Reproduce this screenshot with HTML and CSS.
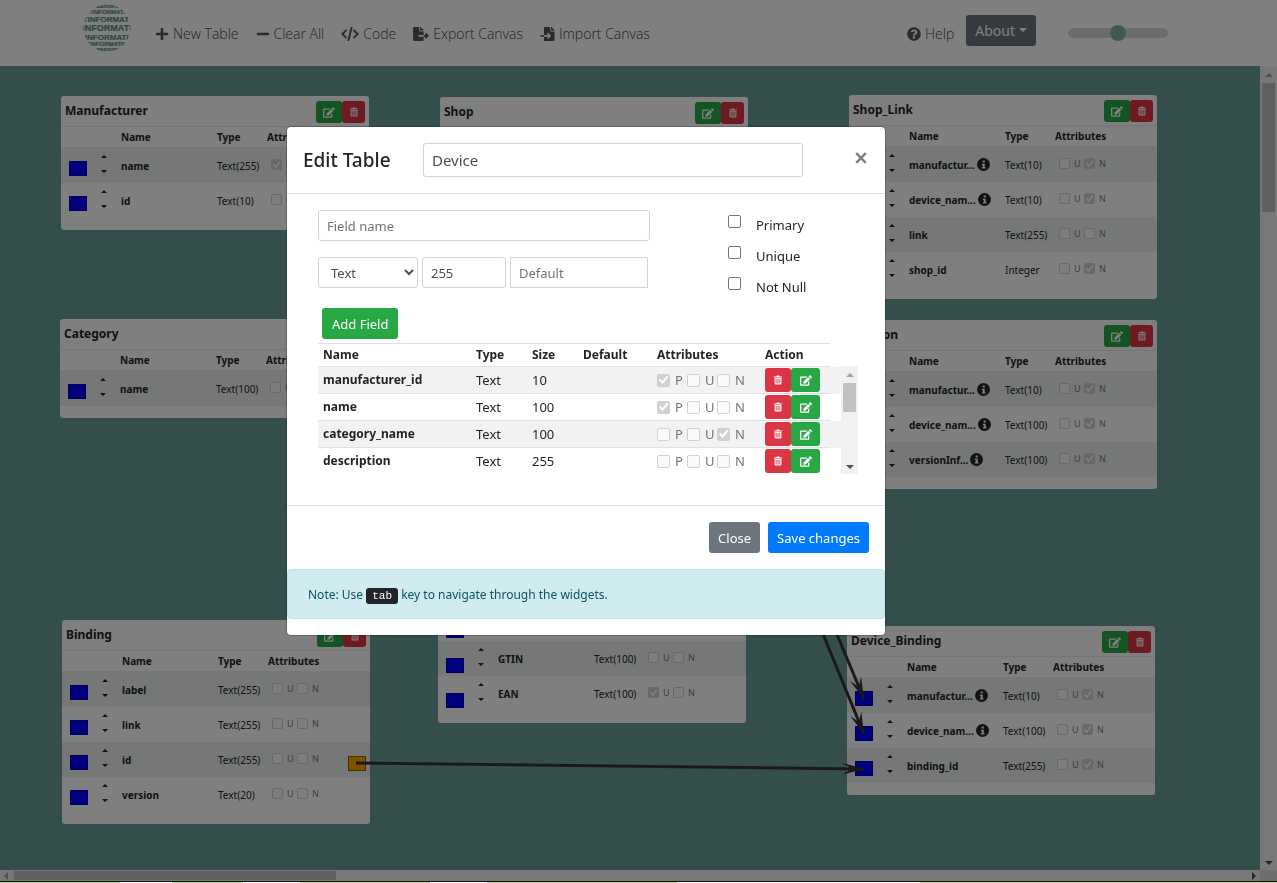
FILE: index.html
```html
<!DOCTYPE html>
<html lang="en">
<head>
<meta charset="utf-8">
<title>Table Designer</title>
<link rel="stylesheet" href="styles.css">
</head>
<body>
<svg class="defs" aria-hidden="true">
  <symbol id="plus" viewBox="0 0 448 512"><path d="M416 208H272V64c0-17.67-14.33-32-32-32h-32c-17.67 0-32 14.33-32 32v144H32c-17.67 0-32 14.33-32 32v32c0 17.67 14.33 32 32 32h144v144c0 17.67 14.33 32 32 32h32c17.67 0 32-14.33 32-32V304h144c17.67 0 32-14.33 32-32v-32c0-17.67-14.33-32-32-32z"/></symbol>
  <symbol id="minus" viewBox="0 0 448 512"><path d="M416 208H32c-17.67 0-32 14.33-32 32v32c0 17.67 14.33 32 32 32h384c17.67 0 32-14.33 32-32v-32c0-17.67-14.33-32-32-32z"/></symbol>
  <symbol id="code" viewBox="0 0 640 512"><path d="M175 125L40 256l135 131M465 125l135 131-135 131M378 30L262 482" fill="none" stroke="currentColor" stroke-width="68" stroke-linecap="round" stroke-linejoin="round"/></symbol>
  <symbol id="export" viewBox="0 0 576 512"><path d="M384 121.900c0-6.300-2.500-12.400-7-16.900L279.100 7c-4.500-4.500-10.600-7-17-7H256v128h128zM571 308l-95.700-96.400c-10.100-10.100-27.400-3-27.400 11.300V288h-64v64h64v65.200c0 14.300 17.300 21.400 27.400 11.300L571 332c6.600-6.600 6.600-17.400 0-24zm-379 28v-32c0-8.800 7.200-16 16-16h176V160H248c-13.200 0-24-10.800-24-24V0H24C10.700 0 0 10.700 0 24v464c0 13.300 10.700 24 24 24h336c13.300 0 24-10.700 24-24V352H208c-8.800 0-16-7.200-16-16z"/></symbol>
  <symbol id="import" viewBox="0 0 512 512"><path d="M16 288c-8.800 0-16 7.200-16 16v32c0 8.800 7.200 16 16 16h112v-64zm489-183L407.100 7c-4.500-4.500-10.600-7-17-7H384v128h128v-6.100c0-6.300-2.500-12.400-7-16.900zm-153 31V0H152c-13.300 0-24 10.700-24 24v264h128v-65.200c0-14.300 17.300-21.400 27.400-11.300L379 308c6.600 6.700 6.600 17.400 0 24l-95.700 96.400c-10.100 10.100-27.400 3-27.400-11.300V352H128v136c0 13.300 10.700 24 24 24h336c13.300 0 24-10.700 24-24V160H376c-13.200 0-24-10.800-24-24z"/></symbol>
  <symbol id="help" viewBox="0 0 512 512"><path d="M504 256c0 136.997-111.043 248-248 248S8 392.997 8 256C8 119.083 119.043 8 256 8s248 111.083 248 248zM262.655 90c-54.497 0-89.255 22.957-116.549 63.758-3.536 5.286-2.353 12.415 2.715 16.258l34.699 26.310c5.205 3.947 12.621 3.008 16.665-2.122 17.864-22.658 30.113-35.797 57.303-35.797 20.429 0 45.698 13.148 45.698 32.958 0 14.976-12.363 22.667-32.534 33.976C247.128 238.528 216 254.941 216 296v4c0 6.627 5.373 12 12 12h56c6.627 0 12-5.373 12-12v-1.333c0-28.462 83.186-29.647 83.186-106.667 0-58.002-60.165-102-116.531-102zM256 338c-25.365 0-46 20.635-46 46 0 25.364 20.635 46 46 46s46-20.636 46-46c0-25.365-20.635-46-46-46z"/></symbol>
  <symbol id="info" viewBox="0 0 16 16"><circle cx="8" cy="8" r="8"/><path d="M7 3h2.500v2.500H7zM6 7h3.500v4.500h1V13H6v-1.500h1v-3H6z" fill="#fff"/></symbol>
  <symbol id="edit" viewBox="0 0 576 512"><path d="M402.600 83.200l90.200 90.200c3.800 3.800 3.800 10 0 13.800L274.400 405.600l-92.800 10.300c-12.400 1.400-22.900-9.100-21.500-21.500l10.300-92.800L388.800 83.200c3.800-3.800 10-3.800 13.800 0zm162-22.900l-48.800-48.800c-15.200-15.200-39.900-15.200-55.200 0l-35.400 35.400c-3.800 3.800-3.800 10 0 13.800l90.200 90.200c3.800 3.800 10 3.800 13.800 0l35.400-35.400c15.200-15.300 15.200-40 0-55.200zM384 346.200V448H64V128h229.800c3.200 0 6.200-1.300 8.500-3.500l40-40c7.600-7.600 2.200-20.500-8.500-20.500H48C21.500 64 0 85.500 0 112v352c0 26.500 21.500 48 48 48h352c26.500 0 48-21.500 48-48V306.200c0-10.700-12.900-16-20.500-8.500l-40 40c-2.200 2.300-3.500 5.300-3.500 8.500z"/></symbol>
  <symbol id="trash" viewBox="0 0 14 16"><path d="M0 2h4l1-2h4l1 2h4v1.500H0zM1 4.500h12V14q0 2-2 2H3q-2 0-2-2zM3 6v8h1.500V6zm3.200 0v8h1.600V6zm3.300 0v8H11V6z" fill-rule="evenodd"/></symbol>
  <symbol id="sort" viewBox="0 0 6 20"><path d="M0 4l3-3 3 3zM0 16h6l-3 3z"/></symbol>
</svg>

<header class="navbar">
  <svg class="logo" viewBox="0 0 48 48" role="img" aria-label="Logo">
    <clipPath id="globe"><circle cx="24" cy="24" r="23.500"/></clipPath>
    <g clip-path="url(#globe)" text-anchor="middle">
      <text x="24" y="4" font-size="4">INFORMATIONFORMAT</text>
      <text x="24" y="10" font-size="6">MATINFORMATION</text>
      <text x="24" y="18" font-size="8">TINFORMATI</text>
      <text x="24" y="27" font-size="9">INFORMATI</text>
      <text x="24" y="36" font-size="8">NINFORMATIO</text>
      <text x="24" y="42" font-size="6">ATINFORMATION</text>
      <text x="24" y="47" font-size="4">INFORMATIONFORM</text>
    </g>
  </svg>
  <nav class="tools">
    <a href="#"><svg class="i14"><use href="#plus"/></svg>New Table</a>
    <a href="#"><svg class="i14"><use href="#minus"/></svg>Clear All</a>
    <a href="#"><svg class="i18"><use href="#code"/></svg>Code</a>
    <a href="#"><svg class="i16"><use href="#export"/></svg>Export Canvas</a>
    <a href="#"><svg class="i15"><use href="#import"/></svg>Import Canvas</a>
  </nav>
  <div class="nav-end">
    <a href="#"><svg class="i14"><use href="#help"/></svg>Help</a>
    <button class="btn about">About<span class="caret"></span></button>
    <input class="zoom" type="range" min="0" max="100" value="50" aria-label="Zoom">
  </div>
</header>

<main class="workspace">
  <section class="canvas">
    <article class="node" style="left:61px;top:30px">
      <header><h2>Manufacturer</h2><button class="ed" aria-label="Edit"><svg><use href="#edit"/></svg></button><button class="rm" aria-label="Delete"><svg><use href="#trash"/></svg></button></header>
      <table>
        <thead><tr><th></th><th></th><th>Name</th><th>Type</th><th>Attributes</th><th></th></tr></thead>
        <tbody>
          <tr><td><i class="port"></i></td><td><svg class="sort"><use href="#sort"/></svg></td><th>name</th><td>Text(255)</td><td><label><input type="checkbox" disabled checked>U</label><label><input type="checkbox" disabled>N</label></td><td></td></tr>
          <tr><td><i class="port"></i></td><td><svg class="sort"><use href="#sort"/></svg></td><th>id</th><td>Text(10)</td><td><label><input type="checkbox" disabled>U</label><label><input type="checkbox" disabled>N</label></td><td></td></tr>
        </tbody>
      </table>
    </article>

    <article class="node" style="left:440px;top:31px">
      <header><h2>Shop</h2><button class="ed" aria-label="Edit"><svg><use href="#edit"/></svg></button><button class="rm" aria-label="Delete"><svg><use href="#trash"/></svg></button></header>
      <table>
        <thead><tr><th></th><th></th><th>Name</th><th>Type</th><th>Attributes</th><th></th></tr></thead>
        <tbody>
          <tr><td><i class="port"></i></td><td><svg class="sort"><use href="#sort"/></svg></td><th>id</th><td>Integer</td><td><label><input type="checkbox" disabled>U</label><label><input type="checkbox" disabled>N</label></td><td></td></tr>
        </tbody>
      </table>
    </article>

    <article class="node" style="left:849px;top:29px">
      <header><h2>Shop_Link</h2><button class="ed" aria-label="Edit"><svg><use href="#edit"/></svg></button><button class="rm" aria-label="Delete"><svg><use href="#trash"/></svg></button></header>
      <table>
        <thead><tr><th></th><th></th><th>Name</th><th>Type</th><th>Attributes</th><th></th></tr></thead>
        <tbody>
          <tr><td><i class="port"></i></td><td><svg class="sort"><use href="#sort"/></svg></td><th><span>manufactur...<svg class="info"><use href="#info"/></svg></span></th><td>Text(10)</td><td><label><input type="checkbox" disabled>U</label><label><input type="checkbox" disabled checked>N</label></td><td></td></tr>
          <tr><td><i class="port"></i></td><td><svg class="sort"><use href="#sort"/></svg></td><th><span>device_nam...<svg class="info"><use href="#info"/></svg></span></th><td>Text(10)</td><td><label><input type="checkbox" disabled>U</label><label><input type="checkbox" disabled checked>N</label></td><td></td></tr>
          <tr><td><i class="port"></i></td><td><svg class="sort"><use href="#sort"/></svg></td><th>link</th><td>Text(255)</td><td><label><input type="checkbox" disabled>U</label><label><input type="checkbox" disabled>N</label></td><td></td></tr>
          <tr><td><i class="port"></i></td><td><svg class="sort"><use href="#sort"/></svg></td><th>shop_id</th><td>Integer</td><td><label><input type="checkbox" disabled>U</label><label><input type="checkbox" disabled checked>N</label></td><td></td></tr>
        </tbody>
      </table>
    </article>

    <article class="node" style="left:60px;top:253px">
      <header><h2>Category</h2><button class="ed" aria-label="Edit"><svg><use href="#edit"/></svg></button><button class="rm" aria-label="Delete"><svg><use href="#trash"/></svg></button></header>
      <table>
        <thead><tr><th></th><th></th><th>Name</th><th>Type</th><th>Attributes</th><th></th></tr></thead>
        <tbody>
          <tr><td><i class="port"></i></td><td><svg class="sort"><use href="#sort"/></svg></td><th>name</th><td>Text(100)</td><td><label><input type="checkbox" disabled>U</label><label><input type="checkbox" disabled>N</label></td><td></td></tr>
        </tbody>
      </table>
    </article>

    <article class="node" style="left:849px;top:254px">
      <header><h2>Version</h2><button class="ed" aria-label="Edit"><svg><use href="#edit"/></svg></button><button class="rm" aria-label="Delete"><svg><use href="#trash"/></svg></button></header>
      <table>
        <thead><tr><th></th><th></th><th>Name</th><th>Type</th><th>Attributes</th><th></th></tr></thead>
        <tbody>
          <tr><td><i class="port"></i></td><td><svg class="sort"><use href="#sort"/></svg></td><th><span>manufactur...<svg class="info"><use href="#info"/></svg></span></th><td>Text(10)</td><td><label><input type="checkbox" disabled>U</label><label><input type="checkbox" disabled checked>N</label></td><td></td></tr>
          <tr><td><i class="port"></i></td><td><svg class="sort"><use href="#sort"/></svg></td><th><span>device_nam...<svg class="info"><use href="#info"/></svg></span></th><td>Text(100)</td><td><label><input type="checkbox" disabled>U</label><label><input type="checkbox" disabled checked>N</label></td><td></td></tr>
          <tr><td><i class="port"></i></td><td><svg class="sort"><use href="#sort"/></svg></td><th><span>versionInf...<svg class="info"><use href="#info"/></svg></span></th><td>Text(100)</td><td><label><input type="checkbox" disabled>U</label><label><input type="checkbox" disabled checked>N</label></td><td></td></tr>
        </tbody>
      </table>
    </article>

    <article class="node" style="left:62px;top:554px">
      <header><h2>Binding</h2><button class="ed" aria-label="Edit"><svg><use href="#edit"/></svg></button><button class="rm" aria-label="Delete"><svg><use href="#trash"/></svg></button></header>
      <table>
        <thead><tr><th></th><th></th><th>Name</th><th>Type</th><th>Attributes</th><th></th></tr></thead>
        <tbody>
          <tr><td><i class="port"></i></td><td><svg class="sort"><use href="#sort"/></svg></td><th>label</th><td>Text(255)</td><td><label><input type="checkbox" disabled>U</label><label><input type="checkbox" disabled>N</label></td><td></td></tr>
          <tr><td><i class="port"></i></td><td><svg class="sort"><use href="#sort"/></svg></td><th>link</th><td>Text(255)</td><td><label><input type="checkbox" disabled>U</label><label><input type="checkbox" disabled>N</label></td><td></td></tr>
          <tr><td><i class="port"></i></td><td><svg class="sort"><use href="#sort"/></svg></td><th>id</th><td>Text(255)</td><td><label><input type="checkbox" disabled>U</label><label><input type="checkbox" disabled>N</label></td><td><i class="port source"></i></td></tr>
          <tr><td><i class="port"></i></td><td><svg class="sort"><use href="#sort"/></svg></td><th>version</th><td>Text(20)</td><td><label><input type="checkbox" disabled>U</label><label><input type="checkbox" disabled>N</label></td><td></td></tr>
        </tbody>
      </table>
    </article>

    <article class="node" style="left:438px;top:453px">
      <header><h2>Device</h2><button class="ed" aria-label="Edit"><svg><use href="#edit"/></svg></button><button class="rm" aria-label="Delete"><svg><use href="#trash"/></svg></button></header>
      <table class="tall">
        <thead><tr><th></th><th></th><th>Name</th><th>Type</th><th>Attributes</th><th></th></tr></thead>
        <tbody>
          <tr><td><i class="port"></i></td><td><svg class="sort"><use href="#sort"/></svg></td><th></th><td></td><td></td><td></td></tr>
          <tr><td><i class="port"></i></td><td></td><th></th><td></td><td></td><td></td></tr>
          <tr><td><i class="port"></i></td><td><svg class="sort"><use href="#sort"/></svg></td><th>GTIN</th><td>Text(100)</td><td><label><input type="checkbox" disabled>U</label><label><input type="checkbox" disabled>N</label></td><td></td></tr>
          <tr><td><i class="port"></i></td><td><svg class="sort"><use href="#sort"/></svg></td><th>EAN</th><td>Text(100)</td><td><label><input type="checkbox" disabled checked>U</label><label><input type="checkbox" disabled>N</label></td><td></td></tr>
        </tbody>
      </table>
    </article>

    <article class="node" style="left:847px;top:560px">
      <header><h2>Device_Binding</h2><button class="ed" aria-label="Edit"><svg><use href="#edit"/></svg></button><button class="rm" aria-label="Delete"><svg><use href="#trash"/></svg></button></header>
      <table>
        <thead><tr><th></th><th></th><th>Name</th><th>Type</th><th>Attributes</th><th></th></tr></thead>
        <tbody>
          <tr><td><i class="port"></i></td><td><svg class="sort"><use href="#sort"/></svg></td><th><span>manufactur...<svg class="info"><use href="#info"/></svg></span></th><td>Text(10)</td><td><label><input type="checkbox" disabled>U</label><label><input type="checkbox" disabled checked>N</label></td><td></td></tr>
          <tr><td><i class="port"></i></td><td><svg class="sort"><use href="#sort"/></svg></td><th><span>device_nam...<svg class="info"><use href="#info"/></svg></span></th><td>Text(100)</td><td><label><input type="checkbox" disabled>U</label><label><input type="checkbox" disabled checked>N</label></td><td></td></tr>
          <tr><td><i class="port"></i></td><td><svg class="sort"><use href="#sort"/></svg></td><th>binding_id</th><td>Text(255)</td><td><label><input type="checkbox" disabled>U</label><label><input type="checkbox" disabled checked>N</label></td><td></td></tr>
        </tbody>
      </table>
    </article>

    <svg class="links" width="1260" height="804" aria-hidden="true">
      <defs><marker id="head" viewBox="0 0 22 12" refX="22" refY="6" markerWidth="22" markerHeight="12" markerUnits="userSpaceOnUse" orient="auto"><path d="M0 0L22 6 0 12 9 6z" fill="#333"/></marker></defs>
      <g stroke="#333" stroke-width="3">
        <path d="M356 697L864 703" marker-end="url(#head)"/>
        <path d="M800 480L864 633" marker-end="url(#head)"/>
        <path d="M800 512L864 668" marker-end="url(#head)"/>
      </g>
    </svg>
  </section>
  <div class="bar vertical"><i class="up"></i><b></b><i class="down"></i></div>
  <div class="bar horizontal"><i class="left"></i><b></b><i class="right"></i></div>
  <div class="corner"></div>
</main>
<footer class="edge"></footer>

<div class="backdrop">
  <section class="modal" role="dialog" aria-labelledby="dlg-title">
    <header class="modal-head">
      <h1 id="dlg-title">Edit Table</h1>
      <input type="text" value="Device" aria-label="Table name">
      <button class="close" aria-label="Close dialog"><svg viewBox="0 0 10 10"><path d="M1 1l8 8M9 1L1 9"/></svg></button>
    </header>
    <div class="modal-body">
      <div class="form">
        <div class="fields">
          <input class="fname" type="text" placeholder="Field name" aria-label="Field name">
          <div class="line">
            <select aria-label="Type"><option>Text</option></select>
            <input class="size" type="text" value="255" aria-label="Size">
            <input class="def" type="text" placeholder="Default" aria-label="Default">
          </div>
        </div>
        <div class="flags">
          <label><input type="checkbox">Primary</label>
          <label><input type="checkbox">Unique</label>
          <label><input type="checkbox">Not Null</label>
        </div>
      </div>
      <button class="btn add">Add Field</button>
      <div class="list">
        <table>
          <thead><tr><th>Name</th><th>Type</th><th>Size</th><th>Default</th><th>Attributes</th><th>Action</th><th></th></tr></thead>
          <tbody>
            <tr><th>manufacturer_id</th><td>Text</td><td>10</td><td></td><td><label><input type="checkbox" disabled checked>P</label><label><input type="checkbox" disabled>U</label><label><input type="checkbox" disabled>N</label></td><td><button class="rm" aria-label="Delete"><svg><use href="#trash"/></svg></button><button class="ed" aria-label="Edit"><svg><use href="#edit"/></svg></button></td><td></td></tr>
            <tr><th>name</th><td>Text</td><td>100</td><td></td><td><label><input type="checkbox" disabled checked>P</label><label><input type="checkbox" disabled>U</label><label><input type="checkbox" disabled>N</label></td><td><button class="rm" aria-label="Delete"><svg><use href="#trash"/></svg></button><button class="ed" aria-label="Edit"><svg><use href="#edit"/></svg></button></td><td></td></tr>
            <tr><th>category_name</th><td>Text</td><td>100</td><td></td><td><label><input type="checkbox" disabled>P</label><label><input type="checkbox" disabled>U</label><label><input type="checkbox" disabled checked>N</label></td><td><button class="rm" aria-label="Delete"><svg><use href="#trash"/></svg></button><button class="ed" aria-label="Edit"><svg><use href="#edit"/></svg></button></td><td></td></tr>
            <tr><th>description</th><td>Text</td><td>255</td><td></td><td><label><input type="checkbox" disabled>P</label><label><input type="checkbox" disabled>U</label><label><input type="checkbox" disabled>N</label></td><td><button class="rm" aria-label="Delete"><svg><use href="#trash"/></svg></button><button class="ed" aria-label="Edit"><svg><use href="#edit"/></svg></button></td><td></td></tr>
          </tbody>
        </table>
        <div class="bar vertical small"><i class="up"></i><b></b><i class="down"></i></div>
      </div>
    </div>
    <footer class="modal-foot">
      <button class="btn">Close</button>
      <button class="btn primary">Save changes</button>
    </footer>
    <p class="note">Note: Use <kbd>tab</kbd> key to navigate through the widgets.</p>
  </section>
</div>
</body>
</html>
```

FILE: styles.css
```css
* { box-sizing: border-box; }
body {
  margin: 0;
  height: 100vh;
  display: flex;
  flex-direction: column;
  overflow: hidden;
  font: 13px/20px "Noto Sans", "Open Sans", sans-serif;
  color: #212529;
}
h1, h2, p { margin: 0; }
button, input, select { font: inherit; color: inherit; margin: 0; }
button { border: 0; padding: 0; }
svg { fill: currentColor; flex: none; }
.defs { position: absolute; width: 0; height: 0; }

/* Top bar */
.navbar { flex: none; height: 66px; display: flex; align-items: center; background: #fff; padding: 0 109px 0 83px; }
.logo { width: 48px; height: 48px; margin-bottom: 10px; fill: #5c8f86; stroke: #5c8f86; stroke-width: .2; font-weight: 700; font-family: "Liberation Sans", sans-serif; }
.tools, .nav-end { display: flex; align-items: center; }
.tools { gap: 17px; margin-left: 24px; }
.navbar a { display: flex; align-items: center; gap: 4px; padding-top: 2px; color: #444; font-size: 14px; font-weight: 300; font-family: "Open Sans", sans-serif; text-decoration: none; }
.navbar a svg { height: 14px; color: #555; }
.i14 { width: 14px; }
.i15 { width: 15px; }
.i16 { width: 16px; }
.i18 { width: 18px; }
.nav-end { margin-left: auto; }
.btn { height: 31px; padding: 0 9px; border-radius: 3px; background: #6c757d; color: #fff; font-size: 13px; }
.about { margin: 0 32px 6px 12px; padding-top: 1px; font-size: 14px; }
.caret { display: inline-block; margin-left: 4px; vertical-align: 4px; border: 4px solid transparent; border-top-color: #fff; border-bottom: 0; }
.zoom { appearance: none; width: 100px; height: 10px; border-radius: 5px; background: #d8d8d8; }
.zoom::-webkit-slider-thumb { appearance: none; width: 16px; height: 16px; border-radius: 50%; background: #7fb5a9; }

/* Diagram area */
.workspace { flex: 1; min-height: 0; display: grid; grid-template: 1fr 11px / 1fr 17px; }
.canvas { position: relative; overflow: hidden; background: #699f96; }
.links { position: absolute; left: 0; top: 0; }
.node { position: absolute; width: 308px; padding-bottom: 12px; background: #fff; border-radius: 3px; font-size: 10px; line-height: 12px; }
.node header { display: flex; height: 31px; padding: 5px 4px 0; border-bottom: 1px solid #ebebeb; }
.node h2 { flex: 1; font-size: 12px; line-height: 19px; }
.ed, .rm { height: 23px; border-radius: 3px; color: #fff; display: inline-flex; align-items: center; justify-content: center; }
.ed { width: 27px; background: #28a745; }
.rm { width: 23px; background: #dc3545; }
.node .ed { width: 26px; }
.node .ed, .node .rm { height: 22px; }
.ed svg { width: 12px; height: 11px; }
.rm svg { width: 8px; height: 10px; }
table { border-collapse: separate; border-spacing: 0; table-layout: fixed; }
th, td { padding: 0; text-align: left; }
.node table { width: 100%; }
.node thead th { height: 21px; border-bottom: 1px solid #ebebeb; }
.node th:nth-child(1) { width: 40px; }
.node th:nth-child(2) { width: 20px; }
.node th:nth-child(3) { width: 96px; }
.node th:nth-child(4) { width: 50px; }
.node th:nth-child(5) { width: 78px; }
.node tbody tr { height: 35px; }
.node tbody tr:nth-child(odd) { background: #edf0ee; }
.node span { display: flex; align-items: center; gap: 2px; }
.info { width: 13px; height: 13px; }
.sort { display: block; width: 6px; height: 20px; margin-bottom: 4px; }
.port { display: block; width: 18px; height: 15px; margin: 6px 0 0 8px; background: #00f; border: 1px solid #0000a0; }
.tall .port { margin-top: 14px; }
.port.source { margin: 8px 0 0 2px; background: #ffa500; border-color: #905c00; }
.node label { display: inline-flex; align-items: center; gap: 4px; width: 25px; color: #777c80; font-size: 9px; }
.node td:nth-child(5) { padding-left: 4px; }

/* Check boxes */
input[type="checkbox"] { appearance: none; flex: none; width: 13px; height: 13px; border: 1px solid #767676; border-radius: 2px; background: #fff; }
input[type="checkbox"]:disabled { border-color: #d1d1d1; background: #fafafa; }
input[type="checkbox"]:disabled:checked { background: #d1d1d1; }
input[type="checkbox"]:checked::after { content: ""; display: block; height: 100%; background: #fff; clip-path: polygon(8% 50%, 22% 38%, 40% 60%, 82% 10%, 95% 22%, 42% 88%); }
.node input[type="checkbox"] { width: 11px; height: 11px; }

/* Scroll bars */
.bar { display: flex; align-items: center; justify-content: space-between; background: #f1f1f1; }
.bar b { background: #c1c1c1; }
.bar i { border: 4px solid transparent; }
.vertical { flex-direction: column; padding: 7px 0 5px; }
.vertical b { width: 13px; height: 129px; margin: 6px 0 auto; }
.up { border-top: 0 !important; border-bottom-color: #a3a3a3 !important; }
.down { border-bottom: 0 !important; border-top-color: #505050 !important; }
.horizontal { padding: 0 4px; }
.horizontal b { height: 9px; width: 322px; margin: 0 auto 0 6px; }
.left { border-left: 0 !important; border-right-color: #a3a3a3 !important; }
.right { border-right: 0 !important; border-left-color: #505050 !important; }
.corner { background: #dcdcdc; }
.edge { position: relative; z-index: 3; flex: none; height: 2px; border-top: 1px solid #111; background: linear-gradient(90deg, #b5cba4 120px, #fff 0 172px, #b5cba4 0 243px, #fff 0 300px, #c9cfa8 0 430px, #fff 0 487px, #c5c8a4 0 677px, #fff 0 920px, #c9cfa8 0); }

/* Dialog */
.backdrop { position: fixed; inset: 0; z-index: 2; display: flex; justify-content: center; align-items: flex-start; padding: 127px 105px 0 0; background: rgba(0, 0, 0, .5); }
.modal { width: 598px; padding-bottom: 16px; background: #fff; border-radius: 4px; box-shadow: 0 0 0 1px rgba(0, 0, 0, .2); }
.modal-head { display: flex; align-items: center; padding: 16px; border-bottom: 1px solid #dee2e6; }
.modal-head h1 { width: 120px; font-size: 19px; font-weight: 500; }
input[type="text"], select { height: 31px; padding: 0 8px; border: 1px solid #ced4da; border-radius: 3px; background: #fff; color: #495057; }
.modal-head input[type="text"] { width: 380px; height: 34px; font-size: 15px; }
::placeholder { color: #6c757d; opacity: 1; }
.close { margin: 0 2px 4px auto; background: none; color: #7f7f7f; }
.close svg { display: block; width: 12px; height: 12px; stroke: currentColor; stroke-width: 2; }
.modal-body { padding: 16px 27px 31px 31px; border-bottom: 1px solid #dee2e6; }
.form { display: flex; justify-content: space-between; }
.fields { display: grid; gap: 16px; align-content: start; }
.fname { width: 332px; }
.line { display: flex; gap: 4px; }
.line select { width: 100px; }
.size { width: 84px; }
.line .def { width: 138px; border-radius: 0; }
.flags { width: 130px; display: grid; gap: 11px; padding-top: 5px; }
.flags label { display: flex; align-items: flex-start; gap: 15px; height: 20px; }
.add { display: block; margin: 11px 0 4px 4px; padding: 0 10px; background: #28a745; }
.list { display: flex; }
.list table { flex: 1; }
.list thead th { height: 24px; border-top: 1px solid #dee2e6; border-bottom: 1px solid #dee2e6; }
.list th { font-size: 12px; }
.list th:nth-child(1) { width: 158px; padding-left: 5px; }
.list th:nth-child(2) { width: 56px; }
.list th:nth-child(3) { width: 51px; }
.list th:nth-child(4) { width: 74px; }
.list th:nth-child(5) { width: 108px; }
.list th:nth-child(6) { width: 65px; }
.list thead th:last-child { width: 11px; border: 0; }
.list tbody tr { height: 27px; }
.list tbody tr:last-child { height: 26px; }
.list tbody tr:nth-child(odd) { background: #f2f2f2; }
.list tbody th, .list tbody td { border-bottom: 1px solid #dee2e6; }
.list tbody tr:last-child > *, .list tbody td:last-child { border-bottom: 0; }
.list td:nth-child(5), .list td:nth-child(6) { white-space: nowrap; font-size: 0; }
.list label { display: inline-flex; align-items: center; gap: 5px; width: 30px; vertical-align: middle; color: #6c757d; font-size: 13px; }
.list .ed, .list .rm { height: 24px; vertical-align: middle; }
.list .rm { width: 26px; }
.list .ed { width: 29px; }
.small { width: 17px; margin-top: 23px; }
.small b { height: 29px; }
.modal-foot { display: flex; justify-content: flex-end; gap: 8px; padding: 16px; }
.primary { background: #007bff; }
.note { height: 50px; padding: 16px 20px; border: 1px solid #bee5eb; border-radius: 4px; background: #d1ecf1; color: #0c5460; font-size: 12px; line-height: 18px; }
kbd { padding: 2px 6px; border-radius: 3px; background: #212529; color: #fff; font: 11px/14px "Liberation Mono", monospace; }
```
